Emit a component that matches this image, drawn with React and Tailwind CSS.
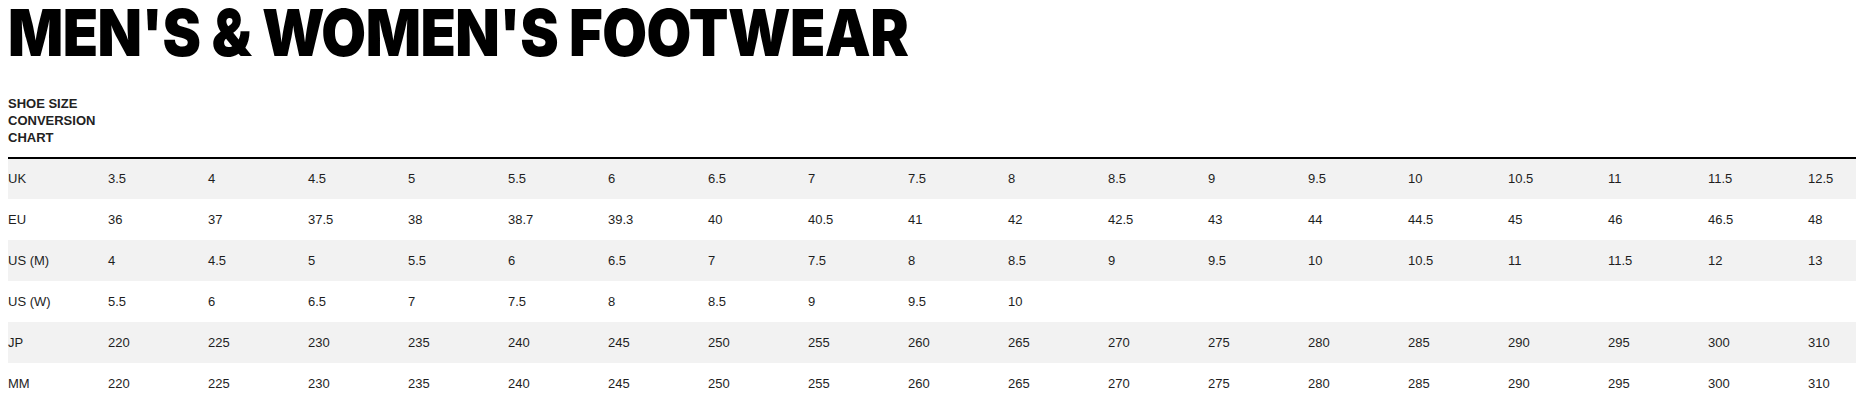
const rows = [
  { label: "UK", values: ["3.5", "4", "4.5", "5", "5.5", "6", "6.5", "7", "7.5", "8", "8.5", "9", "9.5", "10", "10.5", "11", "11.5", "12.5"] },
  { label: "EU", values: ["36", "37", "37.5", "38", "38.7", "39.3", "40", "40.5", "41", "42", "42.5", "43", "44", "44.5", "45", "46", "46.5", "48"] },
  { label: "US (M)", values: ["4", "4.5", "5", "5.5", "6", "6.5", "7", "7.5", "8", "8.5", "9", "9.5", "10", "10.5", "11", "11.5", "12", "13"] },
  { label: "US (W)", values: ["5.5", "6", "6.5", "7", "7.5", "8", "8.5", "9", "9.5", "10", "", "", "", "", "", "", "", ""] },
  { label: "JP", values: ["220", "225", "230", "235", "240", "245", "250", "255", "260", "265", "270", "275", "280", "285", "290", "295", "300", "310"] },
  { label: "MM", values: ["220", "225", "230", "235", "240", "245", "250", "255", "260", "265", "270", "275", "280", "285", "290", "295", "300", "310"] },
];

export default function App() {
  return (
    <div className="w-[1856px] h-[405px] overflow-hidden bg-white text-[#1e1e1e]">
      <h1 className="-mt-[3px] pl-[9px] w-max origin-left scale-x-[0.89] font-['Inter',sans-serif] font-black text-[65px] leading-[72px] tracking-[-0.01em] uppercase whitespace-nowrap text-black">
        MEN'S &amp; WOMEN'S FOOTWEAR
      </h1>
      <div className="ml-2 mt-[26px]">
        <table className="table-fixed border-collapse w-[1900px] font-['Liberation_Sans',Arial,sans-serif] text-[13px]">
          <colgroup>
            <col className="w-[100px]" />
            {rows[0].values.map((_, i) => (
              <col key={i} className="w-[100px]" />
            ))}
          </colgroup>
          <thead>
            <tr className="border-b-2 border-black">
              <th className="text-left align-top font-bold leading-[17px] pb-[11px] pr-2 text-[#222]">
                SHOE SIZE CONVERSION CHART
              </th>
              {rows[0].values.map((_, i) => (
                <th key={i}></th>
              ))}
            </tr>
          </thead>
          <tbody>
            {rows.map((row, r) => (
              <tr key={row.label} className={`h-[41px] ${r % 2 === 0 ? "bg-[#f2f2f2]" : "bg-white"}`}>
                <td className="p-0 align-middle">{row.label}</td>
                {row.values.map((v, i) => (
                  <td key={i} className="p-0 align-middle">{v}</td>
                ))}
              </tr>
            ))}
          </tbody>
        </table>
      </div>
    </div>
  );
}
